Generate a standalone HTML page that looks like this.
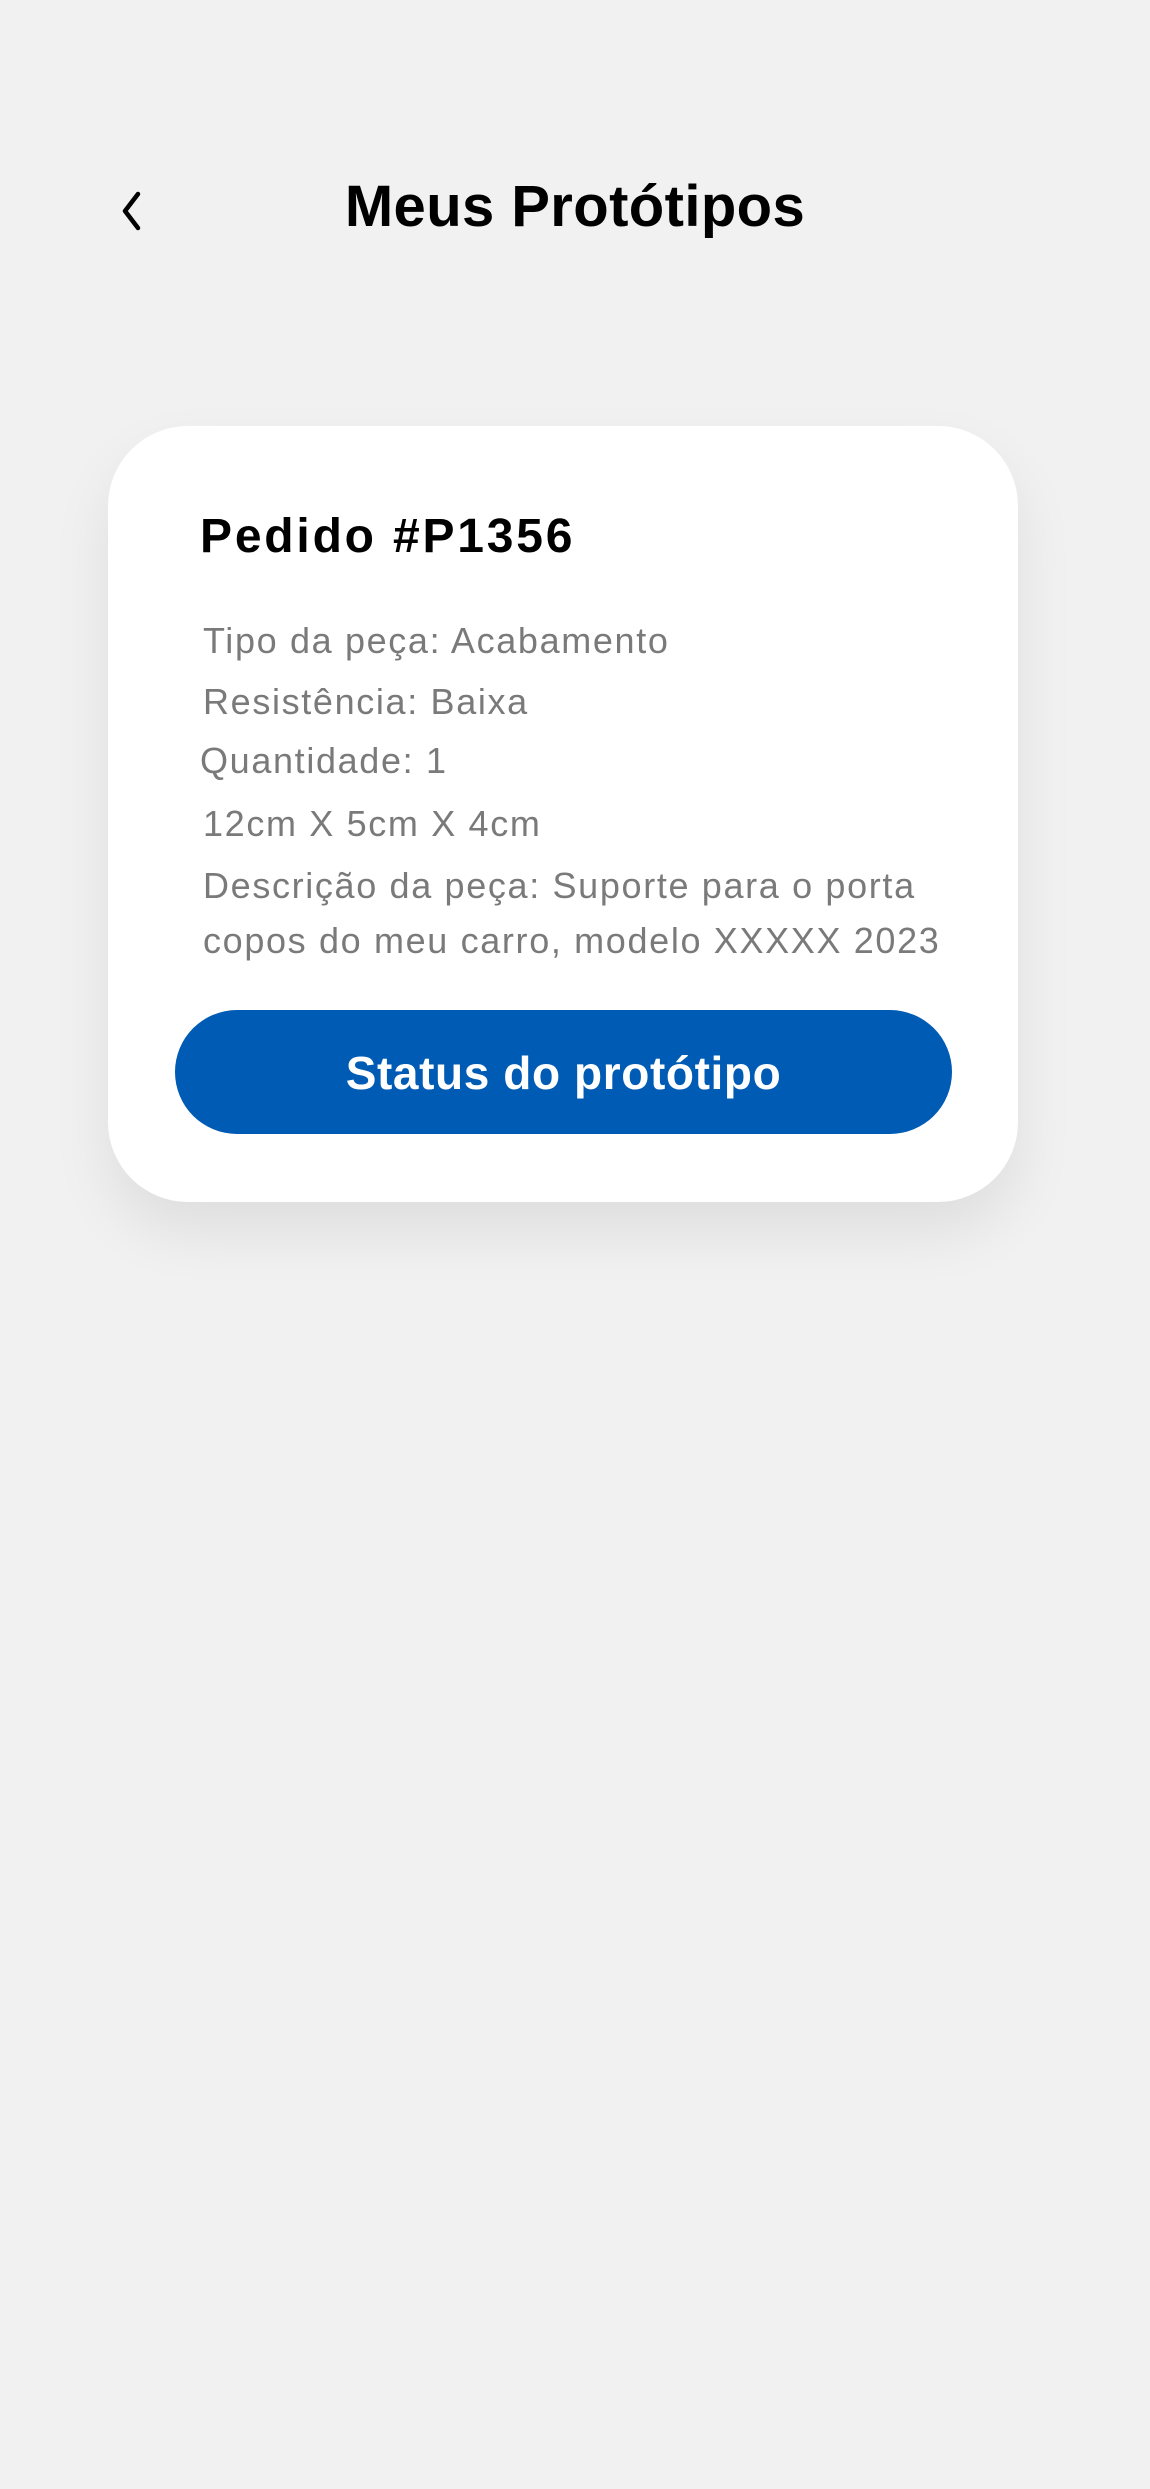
<!DOCTYPE html>
<html><head><meta charset="utf-8"><style>
html,body{margin:0;padding:0}
body{width:1150px;height:2489px;background:#f1f1f1;position:relative;overflow:hidden;font-family:"Liberation Sans",Arial,sans-serif}
.t{position:absolute;white-space:nowrap;line-height:1}
.title{left:0;width:1150px;text-align:center;top:178px;font-size:58px;font-weight:bold;color:#000;letter-spacing:0.4px}
.card{position:absolute;left:108px;top:426px;width:910px;height:776px;background:#fff;border-radius:80px;box-shadow:0 30px 60px rgba(0,0,0,0.08)}
.ped{left:200px;top:513px;font-size:48px;font-weight:bold;color:#000;letter-spacing:2.8px}
.l{left:203px;font-size:36px;color:#7a7a7a;letter-spacing:1.65px}
.btn{position:absolute;left:175px;top:1010px;width:777px;height:124px;border-radius:62px;background:#005bb5}
.bt{left:175px;width:777px;text-align:center;top:1050px;font-size:46px;font-weight:bold;color:#fff;letter-spacing:0.6px}
</style></head><body>
<svg style="position:absolute;left:114px;top:190px" width="32" height="42" viewBox="0 0 32 42"><path d="M24 4 L11 21 L24 38" fill="none" stroke="#000" stroke-width="4.5" stroke-linecap="round" stroke-linejoin="round"/></svg>
<div class="t title">Meus Protótipos</div>
<div class="card"></div>
<div class="t ped">Pedido #P1356</div>
<div class="t l" style="top:623px">Tipo da peça: Acabamento</div>
<div class="t l" style="top:684px">Resistência: Baixa</div>
<div class="t l" style="top:743px;left:200px">Quantidade: 1</div>
<div class="t l" style="top:806px">12cm X 5cm X 4cm</div>
<div class="t l" style="top:868px">Descrição da peça: Suporte para o porta</div>
<div class="t l" style="top:923px">copos do meu carro, modelo XXXXX 2023</div>
<div class="btn"></div>
<div class="t bt">Status do protótipo</div>
</body></html>
